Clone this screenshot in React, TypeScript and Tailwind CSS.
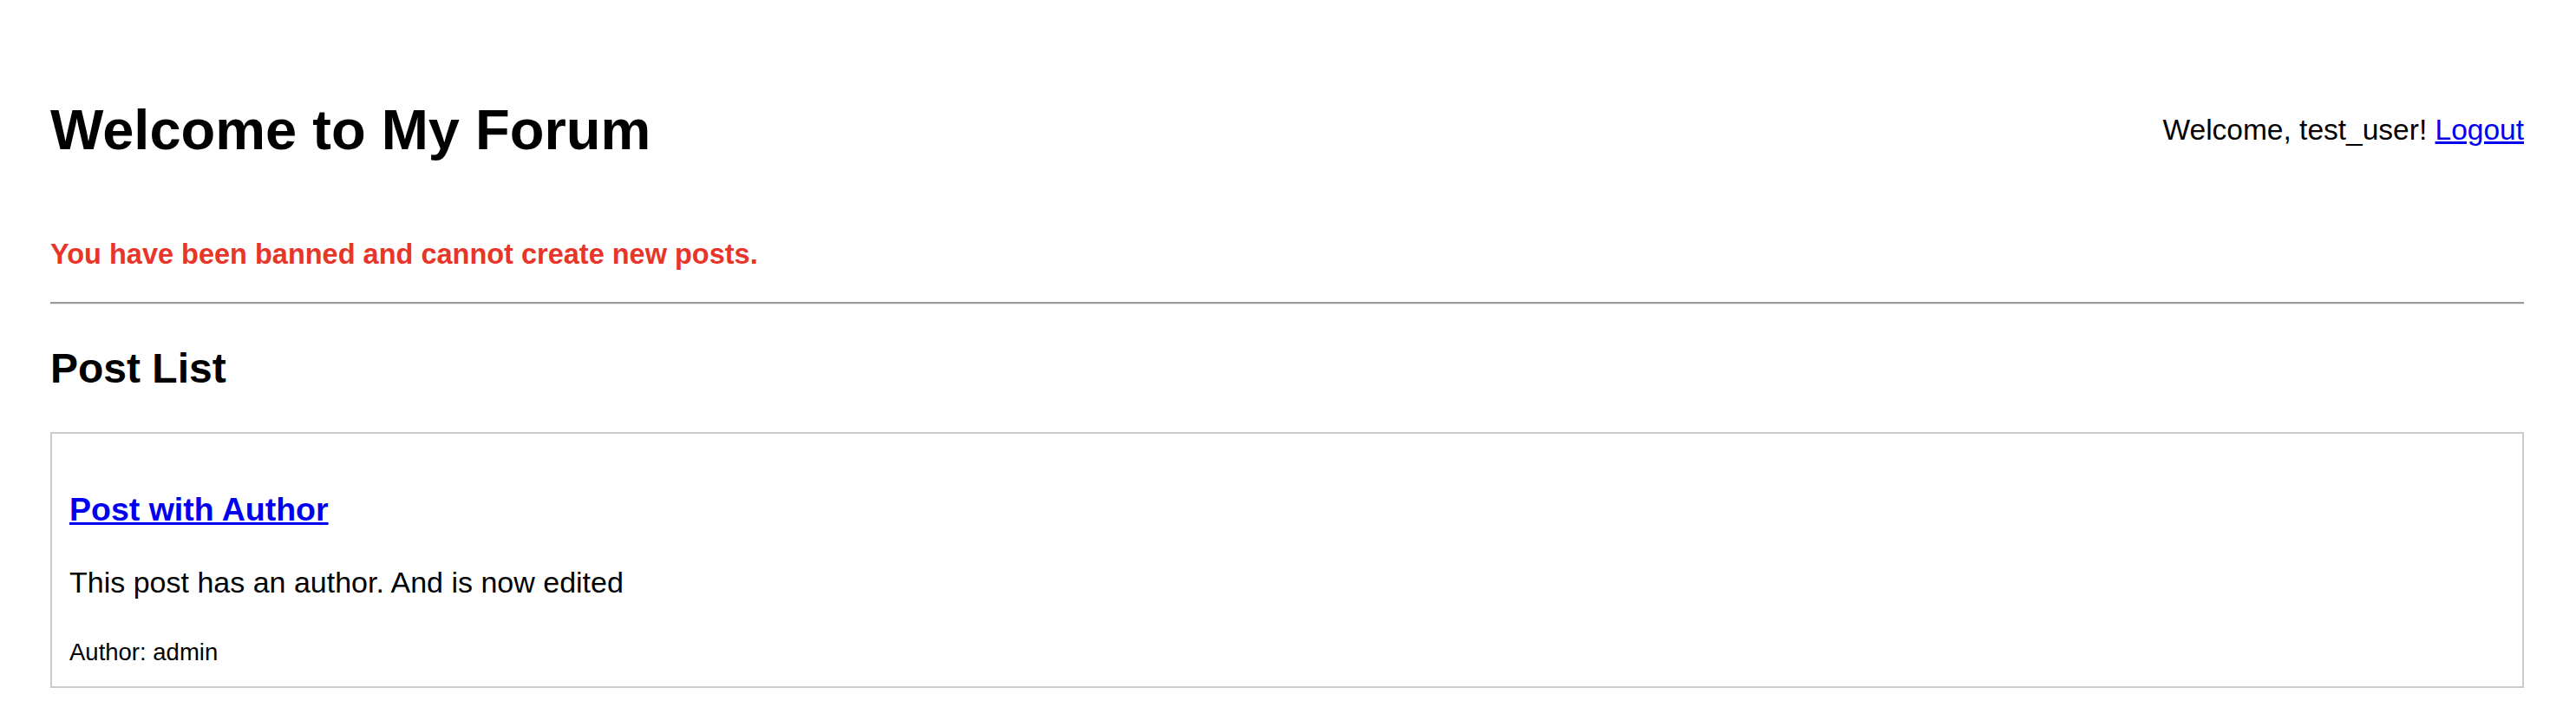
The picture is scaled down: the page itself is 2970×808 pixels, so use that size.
export default function App() {
  const posts = [
    { id: 1, title: "Post with Author", body: "This post has an author. And is now edited", author: "admin" },
  ];

  return (
    <div className="min-h-screen bg-white text-black font-['Liberation_Sans',Arial,sans-serif]">
      <div className="pl-[58px] pr-[60px] pt-[113px]">
        <header className="flex items-center justify-between">
          <h1 className="text-[65px] font-bold leading-[74px]">Welcome to My Forum</h1>
          <div className="text-[33.5px] leading-[38px]">
            Welcome, test_user!{" "}
            <a href="#" className="text-[#0000ee] underline">Logout</a>
          </div>
        </header>

        <p className="mt-[88px] text-[32.5px] font-bold leading-[37px] text-[#e8352a]">
          You have been banned and cannot create new posts.
        </p>

        <hr className="mt-[36px] h-[3px] border-0 border-t-2 border-[#9a9a9a] bg-[#ececec]" />

        <h2 className="mt-[46px] text-[48px] font-bold leading-[55px]">Post List</h2>

        <div className="mt-[46px]">
          {posts.map((p) => (
            <div key={p.id} className="border-2 border-[#cccccc] px-[20px] pt-[65px] pb-[24px]">
              <h3 className="text-[37.5px] font-bold leading-[44px]">
                <a href="#" className="text-[#0000ee] underline">{p.title}</a>
              </h3>
              <p className="mt-[43px] text-[34px] leading-[38px]">{p.body}</p>
              <p className="mt-[47px] text-[27.5px] leading-[30px]">Author: {p.author}</p>
            </div>
          ))}
        </div>
      </div>
    </div>
  );
}
